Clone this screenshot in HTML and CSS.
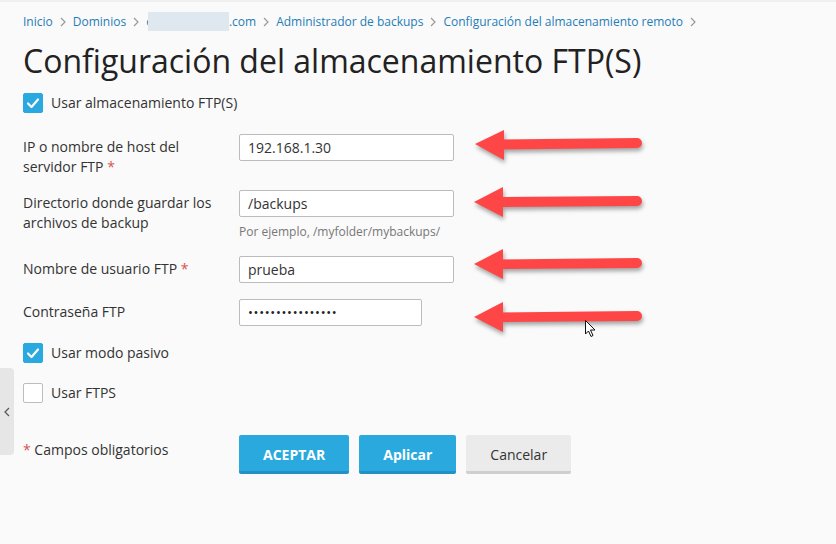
FILE: index.html
```html
<!DOCTYPE html>
<html lang="es">
<head>
<meta charset="utf-8">
<title>Configuración del almacenamiento FTP(S)</title>
<link rel="stylesheet" href="styles.css">
</head>
<body>
<div class="topline"></div>
<div class="page">
  <nav class="crumbs">
    <a class="crumb">Inicio</a><span class="sep"><svg viewBox="0 0 6 10" width="6" height="10"><path d="M1 1l4 4-4 4" fill="none" stroke="#999" stroke-width="1.2"/></svg></span>
    <a class="crumb">Dominios</a><span class="sep"><svg viewBox="0 0 6 10" width="6" height="10"><path d="M1 1l4 4-4 4" fill="none" stroke="#999" stroke-width="1.2"/></svg></span>
    <a class="crumb domain">e<span class="blur"></span>.com</a><span class="sep"><svg viewBox="0 0 6 10" width="6" height="10"><path d="M1 1l4 4-4 4" fill="none" stroke="#999" stroke-width="1.2"/></svg></span>
    <a class="crumb">Administrador de backups</a><span class="sep"><svg viewBox="0 0 6 10" width="6" height="10"><path d="M1 1l4 4-4 4" fill="none" stroke="#999" stroke-width="1.2"/></svg></span>
    <a class="crumb">Configuración del almacenamiento remoto</a><span class="sep"><svg viewBox="0 0 6 10" width="6" height="10"><path d="M1 1l4 4-4 4" fill="none" stroke="#999" stroke-width="1.2"/></svg></span>
  </nav>
  <h1 class="title">Configuración del almacenamiento FTP(S)</h1>

  <label class="check first">
    <span class="box on"><svg viewBox="0 0 20 20" width="20" height="20"><path d="M5 10.5l3.5 3.5L15 6.5" fill="none" stroke="#fff" stroke-width="2.2" stroke-linecap="round" stroke-linejoin="round"/></svg></span>
    <span class="check-text">Usar almacenamiento FTP(S)</span>
  </label>

  <div class="form">
    <div class="row">
      <div class="label">IP o nombre de host del servidor FTP&nbsp;<span class="req">*</span></div>
      <div class="field"><div class="input wide">192.168.1.30</div></div>
    </div>
    <div class="row">
      <div class="label">Directorio donde guardar los archivos de backup</div>
      <div class="field"><div class="input wide">/backups</div><div class="hint">Por ejemplo, /myfolder/mybackups/</div></div>
    </div>
    <div class="row">
      <div class="label">Nombre de usuario FTP&nbsp;<span class="req">*</span></div>
      <div class="field"><div class="input wide">prueba</div></div>
    </div>
    <div class="row">
      <div class="label">Contraseña FTP</div>
      <div class="field"><div class="input narrow pass">••••••••••••••••</div></div>
    </div>
  </div>

  <label class="check pasivo">
    <span class="box on"><svg viewBox="0 0 20 20" width="20" height="20"><path d="M5 10.5l3.5 3.5L15 6.5" fill="none" stroke="#fff" stroke-width="2.2" stroke-linecap="round" stroke-linejoin="round"/></svg></span>
    <span class="check-text">Usar modo pasivo</span>
  </label>
  <label class="check ftps">
    <span class="box"></span>
    <span class="check-text">Usar FTPS</span>
  </label>

  <div class="actions">
    <div class="label required-note"><span class="req">*</span> Campos obligatorios</div>
    <div class="buttons">
      <button class="btn primary upper">ACEPTAR</button>
      <button class="btn primary">Aplicar</button>
      <button class="btn secondary">Cancelar</button>
    </div>
  </div>
</div>

<div class="side-tab"><svg viewBox="0 0 6 10" width="6" height="10"><path d="M5 1L1 5l4 4" fill="none" stroke="#555" stroke-width="1.2"/></svg></div>

<svg class="annot" width="836" height="544" viewBox="0 0 836 544">
  <g class="arrows" fill="#ff4646">
    <g>
      <polygon points="475,144 504,130 504,160"/>
      <path d="M500 139.5 L637 138 A5 5 0 0 1 637 148 L500 149.5 Z"/>
    </g>
    <g>
      <polygon points="474,202 503,187 503,217"/>
      <path d="M499 197 L637 196 A5 5 0 0 1 637 206 L499 207 Z"/>
    </g>
    <g>
      <polygon points="474,264 503,249 503,279"/>
      <path d="M499 259.5 L637 258 A5 5 0 0 1 637 268 L499 269 Z"/>
    </g>
    <g>
      <polygon points="474,317 503,302 503,332"/>
      <path d="M499 312.5 L637 311 A5 5 0 0 1 637 321 L499 322 Z"/>
    </g>
  </g>
  <path class="cursor" d="M585.5 320.5 L585.5 334 L588.5 331 L591 336.5 L593 335.5 L590.5 330 L595 330 Z" fill="#fff" stroke="#111" stroke-width="1"/>
</svg>
</body>
</html>
```
FILE: styles.css
```css
* { box-sizing: border-box; }
html, body { margin: 0; padding: 0; }
body {
  background: #fafafa;
  font-family: "Open Sans", "Liberation Sans", sans-serif;
  color: #333;
  width: 836px;
  height: 544px;
  overflow: hidden;
  position: relative;
}
.topline { height: 2px; background: #f0f0f0; }
.page { padding: 10px 0 0 23px; }
.crumbs { font-size: 12px; line-height: 18px; display: flex; align-items: center; white-space: nowrap; }
.crumb { color: #1f7db8; text-decoration: none; }
.sep { display: inline-flex; margin: 0 7px 0 7px; }
.domain { display: inline-flex; align-items: center; }
.blur { display: inline-block; width: 81px; height: 19px; background: #dfe8ef; margin-left: -5px; }
.title {
  font-size: 32px;
  font-weight: 400;
  line-height: 40px;
  margin: 10px 0 0;
  color: #222;
  letter-spacing: 0;
}
.check { display: flex; align-items: center; font-size: 14px; line-height: 20px; }
.box {
  width: 20px; height: 20px; border-radius: 2px;
  border: 1px solid #bdbdbd; background: #fff;
  display: inline-flex; flex: none;
}
.box svg { margin: -1px; }
.box.on { background: #29a9df; border-color: #29a9df; }
.check-text { margin-left: 8px; }
.check.first { margin-top: 12px; }
.form { display: flex; flex-direction: column; gap: 16px; margin-top: 21px; }
.row { display: grid; grid-template-columns: 216px 1fr; align-items: start; }
.label { font-size: 14px; line-height: 20px; padding-top: 3px; padding-right: 10px; }
.form .label { margin-bottom: -3px; }
.req { color: #d9534f; }
.input {
  height: 27px; background: #fff; border: 1px solid #bcbcbc; border-radius: 2px;
  font-size: 14px; line-height: 25px; padding-left: 8px; color: #333;
}
.input.wide { width: 215px; }
.input.narrow { width: 183px; }
.pass { font-size: 13px; letter-spacing: 0.7px; color: #222; }
.hint { font-size: 12px; line-height: 17px; color: #777; margin-top: 6px; }
.check.pasivo { margin-top: 17px; }
.check.ftps { margin-top: 20px; }
.actions { display: grid; grid-template-columns: 216px 1fr; margin-top: 32px; }
.required-note { padding-top: 5px; }
.buttons { display: flex; gap: 10px; }
.btn {
  font-family: "Open Sans", "Liberation Sans", sans-serif;
  font-size: 14px; height: 39px; padding: 0 24px; border: 0; border-radius: 2px;
  cursor: pointer;
}
.btn.primary { background: #29a9dd; color: #fff; font-weight: 700; border-bottom: 3px solid #2392c2; padding-top: 3px; }
.btn.secondary { background: #ebebeb; color: #333; border-bottom: 3px solid #cfcfcf; padding-top: 3px; }
.side-tab {
  position: absolute; left: 0; top: 368px; width: 14px; height: 87px;
  background: #e6e6e6; border-radius: 0 4px 4px 0;
  display: flex; align-items: center; justify-content: center;
}
.annot { position: absolute; left: 0; top: 0; pointer-events: none; }
.arrows g { filter: drop-shadow(1px 3px 2px rgba(0,0,0,0.35)); }
```
